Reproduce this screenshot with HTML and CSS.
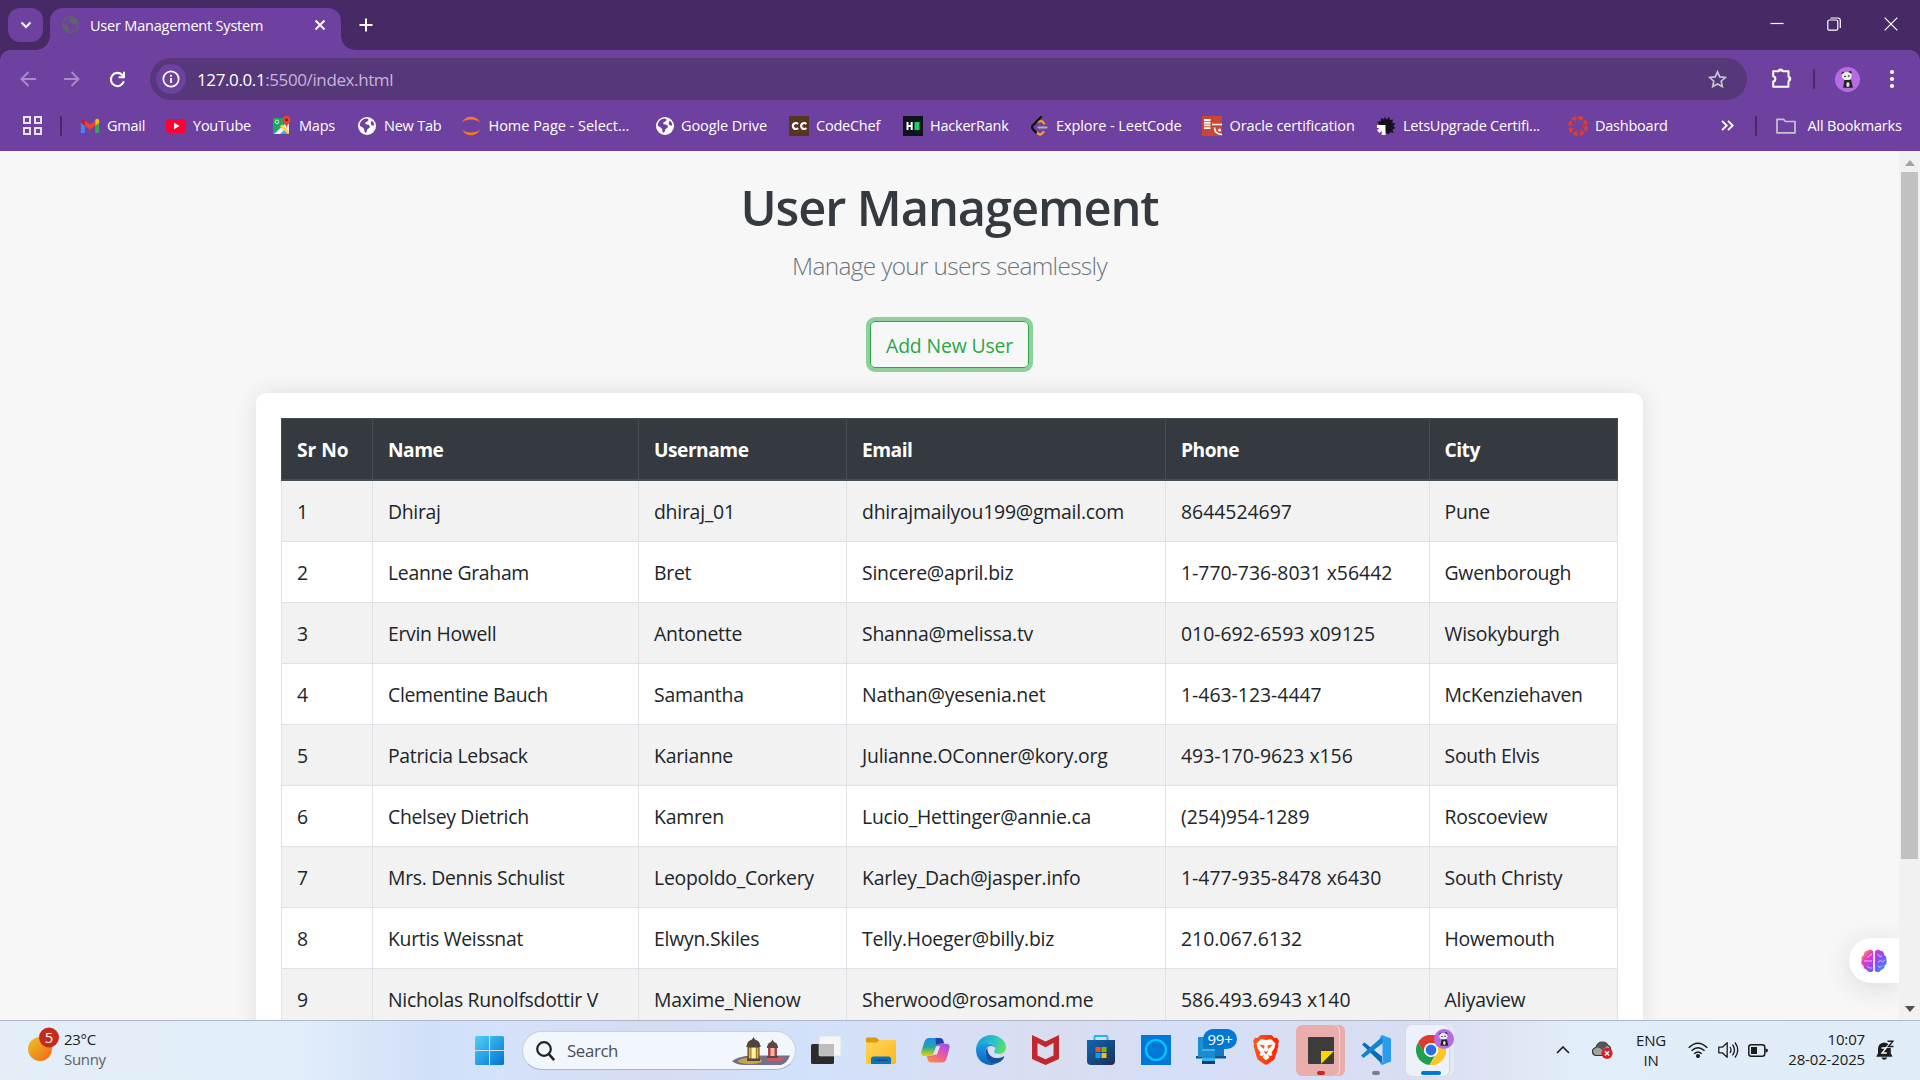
FILE: index.html
```html
<!DOCTYPE html>
<html lang="en">
<head>
<meta charset="utf-8">
<title>User Management System</title>
<link rel="stylesheet" href="styles.css">
</head>
<body>
<svg class="defs" width="0" height="0">
  <defs>
    <symbol id="globe" viewBox="0 0 20 20">
      <circle cx="10" cy="10" r="9" fill="currentColor"/>
      <path class="globe-land" d="M9.6 2.6c2 .2 2.500 1.400 1.300 2.500-1 .9-2.600.8-2.700 2.200 0 1.300 1.500 1.200 2.900 1.400 1.700.3 2.100 1.600 1.500 2.700-.7 1.100-2 .9-2.300 2.200-.3 1.500-.6 2.700-1.700 3.100-1.400-.3-1.200-2.300-1.500-3.500C6.700 11.500 4.200 10.800 2.700 9.500 2.900 5.800 6 2.700 9.600 2.600zM15 4.800c1.300 1.200 2.200 2.800 2.300 4.500-1.200.6-2.900.2-3.400-1-.4-1.300.1-2.600 1.100-3.500z"/>
    </symbol>
    <symbol id="globe-outline" viewBox="0 0 20 20">
      <circle cx="10" cy="10" r="8.200" fill="none" stroke="currentColor" stroke-width="1.600"/>
      <path fill="currentColor" d="M2 9c2.500 2 5 .8 5.300 2.800.2 1.400 1.600 1.500 1.500 3L8 18C4 17 1.500 13 2 9zM9 2c4-.5 7.500 2 8.500 6-1.300 2-3.300 2.500-4.500 1.500-1.500-1.200-4.500-.8-4.600-2.700C8.300 5 10.500 4.500 9 2z"/>
    </symbol>
    <symbol id="panda" viewBox="0 0 24 24">
      <circle cx="12" cy="12" r="12" fill="#b56ce2"/>
      <circle cx="7.800" cy="6" r="1.400" fill="#222"/><circle cx="14.500" cy="5.200" r="1.400" fill="#222"/>
      <ellipse cx="11.300" cy="8.700" rx="4.800" ry="4" fill="#eee"/>
      <ellipse cx="9.600" cy="9" rx="1" ry=".7" fill="#222"/><ellipse cx="13.200" cy="8.600" rx="1" ry=".7" fill="#222"/>
      <path d="M9 12.500h6.500l1.700 7.500H7.800z" fill="#222"/>
      <ellipse cx="12.400" cy="16.800" rx="1.600" ry="2.500" fill="#ddd"/>
    </symbol>
    <linearGradient id="gSun" x1="0" y1="0" x2="1" y2="1"><stop offset="0" stop-color="#edc52f"/><stop offset="1" stop-color="#f2640e"/></linearGradient>
    <linearGradient id="gWin" x1="0" y1="0" x2="1" y2="1"><stop offset="0" stop-color="#4fd0fb"/><stop offset="1" stop-color="#0272d1"/></linearGradient>
    <linearGradient id="gFold" x1="0" y1="0" x2="1" y2="1"><stop offset="0" stop-color="#ffd75e"/><stop offset="1" stop-color="#fbb81a"/></linearGradient>
    <linearGradient id="gCopA" x1="0" y1="0" x2="0" y2="1"><stop offset="0" stop-color="#1a8bee"/><stop offset=".5" stop-color="#27a4a4"/><stop offset=".78" stop-color="#8fc43b"/><stop offset="1" stop-color="#f5c518"/></linearGradient>
    <linearGradient id="gCopB" x1=".8" y1="0" x2=".2" y2="1"><stop offset="0" stop-color="#a04ff0"/><stop offset=".5" stop-color="#ea5a9c"/><stop offset="1" stop-color="#fb8a4a"/></linearGradient>
    <linearGradient id="gEdge" x1="0" y1=".3" x2="1" y2=".6"><stop offset="0" stop-color="#159fe0"/><stop offset=".6" stop-color="#2fc5c3"/><stop offset="1" stop-color="#62e15a"/></linearGradient>
    <linearGradient id="gEdgeB" x1="0" y1="0" x2="0" y2="1"><stop offset="0" stop-color="#1aa0e6"/><stop offset="1" stop-color="#0a63bd"/></linearGradient>
    <linearGradient id="gStore" x1="0" y1="0" x2="1" y2="1"><stop offset="0" stop-color="#0c67b8"/><stop offset="1" stop-color="#1f2f52"/></linearGradient>
    <linearGradient id="gBrain" gradientUnits="userSpaceOnUse" x1="2" y1="2" x2="25" y2="22"><stop offset="0" stop-color="#ff9d2e"/><stop offset=".25" stop-color="#ee35c4"/><stop offset=".55" stop-color="#8a4df5"/><stop offset="1" stop-color="#2496ff"/></linearGradient>
    <linearGradient id="gBrave" x1="0" y1="0" x2="1" y2="0"><stop offset="0" stop-color="#ff5a1f"/><stop offset="1" stop-color="#ff2000"/></linearGradient>
  </defs>
</svg>

<div class="screen">
  <header class="tabstrip">
    <div class="tab-search"><svg width="12" height="12" viewBox="0 0 12 12"><path d="M1.500 3.500 6 8l4.500-4.500" fill="none" stroke="#fff" stroke-width="2"/></svg></div>
    <div class="tab">
      <svg class="tab-icon" width="19" height="19"><use href="#globe-outline"/></svg>
      <span class="tab-title">User Management System</span>
      <svg width="12" height="12" viewBox="0 0 12 12"><path d="m1.500 1.500 9 9m0-9-9 9" stroke="#fff" stroke-width="1.800"/></svg>
    </div>
    <svg class="new-tab" width="14" height="14" viewBox="0 0 14 14"><path d="M7 .5v13M.5 7h13" stroke="#fff" stroke-width="2"/></svg>
    <div class="win-controls">
      <svg width="14" height="14" viewBox="0 0 14 14"><path d="M.5 6.500h13" stroke="#fff" stroke-width="1.200"/></svg>
      <svg width="14" height="14" viewBox="0 0 14 14" fill="none" stroke="#fff" stroke-width="1.200"><rect x=".8" y="3" width="10" height="10.200" rx="1.500"/><path d="M3.500 1h7.300q2.500 0 2.500 2.500v7.500"/></svg>
      <svg width="14" height="14" viewBox="0 0 14 14"><path d="m.7.7 12.600 12.600m0-12.600L.7 13.300" stroke="#fff" stroke-width="1.200"/></svg>
    </div>
  </header>

  <div class="chrome">
    <nav class="toolbar">
      <svg class="dim" width="16" height="16" viewBox="0 0 16 16"><path d="M16 8H2m6.500-7L1.500 8l7 7" fill="none" stroke="#a98bc9" stroke-width="1.900"/></svg>
      <svg class="dim" width="16" height="16" viewBox="0 0 16 16"><path d="M0 8h14M7.500 1l7 7-7 7" fill="none" stroke="#a98bc9" stroke-width="1.900"/></svg>
      <svg width="17" height="17" viewBox="0 0 17 17"><path d="M14.800 10.200A6.600 6.600 0 1 1 13.300 4L15 5.800" fill="none" stroke="#fff" stroke-width="2.100"/><path d="M16 .8v6.400H9.600V5.200H14V.8z" fill="#fff"/></svg>
      <div class="omnibox">
        <span class="site-info"><svg width="18" height="18" viewBox="0 0 18 18"><circle cx="9" cy="9" r="7.700" fill="none" stroke="#fff" stroke-width="1.700"/><path d="M9 8v5M9 4.800v1.900" stroke="#fff" stroke-width="1.800"/></svg></span>
        <span class="url">127.0.0.1<span>:5500/index.html</span></span>
        <svg class="star" width="19" height="19" viewBox="0 0 19 19"><path d="m9.500 1.900 2.300 5 5.400.6-4 3.700 1.100 5.400-4.800-2.700-4.800 2.700 1.100-5.400-4-3.700 5.400-.6z" fill="none" stroke="#c9c3cf" stroke-width="1.700"/></svg>
      </div>
      <svg class="ext" width="22" height="22" viewBox="0 0 22 22"><path d="M2.200 4.200H7.500a2.300 2.300 0 0 1 4.500 0h5.500v5.600a2.300 2.300 0 0 1 0 4.500v5.500H2.200v-5.200a2.700 2.700 0 0 0 0-5.300z" fill="none" stroke="#fff" stroke-width="2" stroke-linejoin="round"/><path d="M8.100 4.400a1.700 2.600 0 0 1 3.300 0zM17.400 10.400a2.600 1.700 0 0 1 0 3.300z" fill="#fff"/></svg>
      <i class="divider"></i>
      <svg class="avatar" width="25" height="25"><use href="#panda"/></svg>
      <svg width="6" height="20" viewBox="0 0 6 20" fill="#fff"><circle cx="3" cy="3" r="2.100"/><circle cx="3" cy="10" r="2.100"/><circle cx="3" cy="17" r="2.100"/></svg>
    </nav>

    <nav class="bookmarks">
      <svg class="apps" width="19" height="19" viewBox="0 0 19 19" fill="none" stroke="#e8e0f0" stroke-width="2"><path d="M1 1h6v6H1zM12 1h6v6h-6zM1 12h6v6H1zM12 12h6v6h-6z"/></svg>
      <i class="divider"></i>
      <a><svg viewBox="0 0 20 20"><path d="M.8 5v12h4V9.200z" fill="#4285f4"/><path d="M19.200 5v12h-4V9.200z" fill="#34a853"/><path d="M15.200 4.500v5.200l4-3V5c0-2-2.300-2.900-3.700-1.600z" fill="#fbbc04"/><path d="m4.800 9.700 5.200 4 5.200-4V4.500L10 8.400 4.800 4.500z" fill="#ea4335"/><path d="M.8 5v1.700l4 3V4.500l-.5-.9C2.900 2.600.8 3.300.8 5z" fill="#c5221f"/></svg>Gmail</a>
      <a><svg viewBox="0 0 20 20"><rect y="3" width="20" height="14" rx="3" fill="#ff0033"/><path d="m8 6.800 5.500 3.200L8 13.200z" fill="#fff"/></svg>YouTube</a>
      <a><svg viewBox="0 0 20 20"><path d="M1 2h16v16H1z" fill="#1fa463"/><path d="m1 18 8-7.500 8 7.500z" fill="#4aa0f5"/><path d="M2.500 18 17 4v5.500L8 18z" fill="#f4f4f4"/><path d="m10 11.500 7 6.500V8l-2-1z" fill="#f1f1f1"/><path d="m8 10.300 2-2L17 15.500V18h-1.500z" fill="#fdd22e"/><circle cx="5" cy="5.800" r="1.800" fill="none" stroke="#d8f0e2"/><path d="M14.500 0a4 4 0 0 1 4 4c0 3.500-4 4-4 8.500 0-4.500-4-5-4-8.500a4 4 0 0 1 4-4z" fill="#ea4335"/><circle cx="14.500" cy="4" r="1.400" fill="#7e1a14"/></svg>Maps</a>
      <a><svg class="white"><use href="#globe"/></svg>New Tab</a>
      <a class="wide"><svg viewBox="0 0 20 20" fill="#f37726"><path d="M1 6.500C3 2 7 .8 10 .8S17 2 19 6.500C16.500 4.300 13.500 3.500 10 3.500S3.500 4.300 1 6.500zM1 13.500C3 18 7 19.200 10 19.200s7-1.200 9-5.700c-2.500 2.200-5.500 3-9 3s-6.500-.8-9-3z"/></svg>Home Page - Select...</a>
      <a class="drive"><svg class="white"><use href="#globe"/></svg>Google Drive</a>
      <a><svg viewBox="0 0 20 20"><path d="M0 0h20v20H0z" fill="#56361e"/><path d="M9 7.900A3 3 0 1 0 9 12.100M17.300 7.900a3 3 0 1 0 0 4.200" fill="none" stroke="#fff" stroke-width="2.200"/></svg>CodeChef</a>
      <a><svg viewBox="0 0 20 20"><path d="M0 0h20v20H0z" fill="#0e141e"/><path d="M4.500 6v8M8.700 6v8M4.500 10h4.200" stroke="#fff" stroke-width="2"/><path d="M11.500 6h5v8h-5z" fill="#1ad660"/></svg>HackerRank</a>
      <a class="tight"><svg viewBox="0 0 20 20" fill="none" stroke-linecap="round"><path d="M7 5.800 10 5q1.500.3 3 2.300M6 16.500q2.500 3 4.500 1.500l2-2" stroke="#ffa116" stroke-width="2.200"/><path d="M10 1 1.800 9.500q-1.500 1.800 0 3.500L5 16.500" stroke="#090909" stroke-width="2.200"/><path d="M7.500 11.500h8" stroke="#b3b3b3" stroke-width="2.200"/></svg>Explore - LeetCode</a>
      <a class="oracle"><svg viewBox="0 0 20 20"><path d="M0 0h20v20H0z" fill="#c74634"/><path d="M2 4h6.500M2 6.700h6.500M2 9.400h6.500M2 12.100h6.500" stroke="#fff" stroke-width="1.900"/><path d="M10 8.500h10M12.500 11.500q0 6.500 7.500 7" stroke="#fff" stroke-width="1.600" fill="none"/><circle cx="17.500" cy="14" r="1.600" fill="#fff"/></svg>Oracle certification</a>
      <a><svg viewBox="0 0 20 20"><path d="m9 0 1 3.500L13.500 1l.5 3 3-.5-.8 3.200 3.300.8-2.200 2.500 2.200 2-3 1.500 1 3.500-3.500-.8-1.500 2.300-3-2.500L5 13 1 11l2.500-2.500L1 6l3.700-1L5 2l3 1.500z" fill="#15121c"/><path d="M1 9h8.500v10H5.700v-4.200L3.500 17 1 14.300l2.500-2.200H1z" fill="#fff"/></svg>LetsUpgrade Certifi...</a>
      <a><svg viewBox="0 0 20 20" fill="none"><circle cx="10" cy="10" r="8.300" stroke="#e23c2c" stroke-width="3.200" stroke-dasharray="4.700 1.820"/><circle cx="10" cy="10" r="5" stroke="#e23c2c" stroke-width="1.500" stroke-dasharray="1.500 2.430"/></svg>Dashboard</a>
      <svg class="more" width="13" height="11" viewBox="0 0 13 11"><path d="m1 .8 4.700 4.700L1 10.200M7 .8l4.700 4.700L7 10.200" fill="none" stroke="#fff" stroke-width="1.900"/></svg>
      <i class="divider"></i>
      <a class="all"><svg viewBox="0 0 20 20" fill="none" stroke="#c9c3cf" stroke-width="1.700" stroke-linejoin="round"><path d="M1 3.300h6.500l2 2.200H19v11.300H1z"/></svg>All Bookmarks</a>
    </nav>
  </div>

  <main class="viewport">
    <div class="page">
      <h1>User Management</h1>
      <p class="lead">Manage your users seamlessly</p>
      <button class="add">Add New User</button>
      <section class="card">
        <table>
          <colgroup><col class="c1"><col class="c2"><col class="c3"><col class="c4"><col class="c5"><col class="c6"></colgroup>
          <thead><tr><th>Sr No</th><th>Name</th><th>Username</th><th>Email</th><th>Phone</th><th>City</th></tr></thead>
          <tbody>
            <tr><td>1</td><td>Dhiraj</td><td>dhiraj_01</td><td>dhirajmailyou199@gmail.com</td><td>8644524697</td><td>Pune</td></tr>
            <tr><td>2</td><td>Leanne Graham</td><td>Bret</td><td>Sincere@april.biz</td><td>1-770-736-8031 x56442</td><td>Gwenborough</td></tr>
            <tr><td>3</td><td>Ervin Howell</td><td>Antonette</td><td>Shanna@melissa.tv</td><td>010-692-6593 x09125</td><td>Wisokyburgh</td></tr>
            <tr><td>4</td><td>Clementine Bauch</td><td>Samantha</td><td>Nathan@yesenia.net</td><td>1-463-123-4447</td><td>McKenziehaven</td></tr>
            <tr><td>5</td><td>Patricia Lebsack</td><td>Karianne</td><td>Julianne.OConner@kory.org</td><td>493-170-9623 x156</td><td>South Elvis</td></tr>
            <tr><td>6</td><td>Chelsey Dietrich</td><td>Kamren</td><td>Lucio_Hettinger@annie.ca</td><td>(254)954-1289</td><td>Roscoeview</td></tr>
            <tr><td>7</td><td>Mrs. Dennis Schulist</td><td>Leopoldo_Corkery</td><td>Karley_Dach@jasper.info</td><td>1-477-935-8478 x6430</td><td>South Christy</td></tr>
            <tr><td>8</td><td>Kurtis Weissnat</td><td>Elwyn.Skiles</td><td>Telly.Hoeger@billy.biz</td><td>210.067.6132</td><td>Howemouth</td></tr>
            <tr><td>9</td><td>Nicholas Runolfsdottir V</td><td>Maxime_Nienow</td><td>Sherwood@rosamond.me</td><td>586.493.6943 x140</td><td>Aliyaview</td></tr>
          </tbody>
        </table>
      </section>
      <div class="assistant">
        <svg width="26" height="24" viewBox="0 0 26 24"><path d="M12.200 2.500C11 .3 8 0 6.500 1.800 4 1.800 2.800 3.800 3 6 .8 7 .2 9 .8 11c-1.200 2.200-.3 4.700 1.700 5.500-.3 2.300 1.300 4 3.200 4.300 1.500 2.800 5 3.200 6.500 1z" fill="url(#gBrain)"/><path d="M13.800 2.500C15 .3 18 0 19.500 1.800c2.500 0 3.700 2 3.500 4.200 2.200 1 2.800 3 2.200 5 1.200 2.200.3 4.700-1.700 5.500.3 2.300-1.300 4-3.200 4.300-1.500 2.800-5 3.200-6.500 1z" fill="url(#gBrain)"/><path d="M3 12h8M6 8q2 .5 3-2l2-1M6 17q1 2.500 5 2M17 5l1.500 2.500L21 7M17 13l2.500-1.500 2 1.500 2-2M17 17l2 1.500 2-2" fill="none" stroke="#f4c8ff" stroke-width=".9"/></svg>
      </div>
    </div>
    <div class="scrollbar">
      <svg width="10" height="6" viewBox="0 0 10 6"><path d="M5 0l5 6H0z" fill="#a3a3a3"/></svg>
      <div class="thumb"></div>
      <svg width="10" height="6" viewBox="0 0 10 6"><path d="M0 0h10L5 6z" fill="#505050"/></svg>
    </div>
  </main>

  <footer class="taskbar">
    <div class="weather">
      <svg width="34" height="36" viewBox="0 0 34 36"><circle cx="12" cy="22" r="12" fill="url(#gSun)"/><circle cx="21" cy="10.500" r="10" fill="#c42b1c"/><text x="21" y="16" text-anchor="middle" class="badge-num">5</text></svg>
      <div class="weather-text"><span>23°C</span><span class="grey">Sunny</span></div>
    </div>
    <svg class="start" width="29" height="29" viewBox="0 0 29 29" fill="url(#gWin)"><path d="M1.500 0H14v14H0V1.500Q0 0 1.500 0zM15 0h12.500Q29 0 29 1.500V14H15zM0 15h14v14H1.500Q0 29 0 27.500zM15 15h14v12.500q0 1.500-1.500 1.500H15z"/></svg>
    <div class="search">
      <svg width="19" height="20" viewBox="0 0 19 20"><circle cx="8" cy="8" r="6.800" fill="none" stroke="#222" stroke-width="2.200"/><path d="m12.800 13 4.700 5.300" stroke="#222" stroke-width="2.600" stroke-linecap="round"/></svg>
      <span>Search</span>
      <svg class="lanterns" width="60" height="30" viewBox="0 0 60 30"><path d="M1 25Q8 20 20 19.500h39q-3 8-9 9.500H14Q5 29 1 25z" fill="#75708a"/><ellipse cx="19" cy="25" rx="12" ry="3" fill="#c6a840"/><ellipse cx="44" cy="23" rx="9" ry="2.300" fill="#ca5968"/><path d="M16 9q0-4 5-5.500L22.500 1 24 3.500Q29 5 29 9zM15.500 9h14v2h-14zM16 22.500h13V25H16z" fill="#51433e"/><path d="M16.500 11h12v12h-12z" fill="#4a3a28"/><path d="M17.700 11.500h2v11h-2zM25.500 11.500h2v11h-2z" fill="#e3b338"/><path d="M20.300 11.500h4.600v11h-4.600z" fill="#fff1a6"/><path d="M36.500 10q0-3 3.500-4l1.500-2.500L43 6q3.500 1 3.500 4zM36 10h11v2H36zM36 20h11v2H36z" fill="#5b4747"/><path d="M37 12h9v8h-9z" fill="#a24446"/><path d="M39.500 12h4v8h-4z" fill="#ffb2a0"/></svg>
    </div>
    <div class="tasks">
      <span><svg width="30" height="28" viewBox="0 0 30 28"><rect y="8" width="23" height="20" rx="1.500" fill="#2b2b2b"/><rect x="8" width="22" height="20" rx="1.200" fill="#f6f6f6"/><path d="M8 8h15v12H8z" fill="#bdbdbd"/><rect x="8" width="22" height="20" rx="1.200" fill="none" stroke="#d4d6dc" stroke-width=".6"/></svg></span>
      <span><svg width="30" height="27" viewBox="0 0 30 27"><path d="M0 2Q0 .5 1.500.5H10L13 3v5H0z" fill="#dc9b06"/><path d="M0 5.500h11L13.500 3H28.500Q30 3 30 4.500V25.500Q30 27 28.500 27H1.500Q0 27 0 25.500z" fill="url(#gFold)"/><path d="M5 27v-5q0-2.500 2.500-2.500h15Q25 19.500 25 22v5z" fill="#0c72bf"/><path d="M8.500 23.200h13" stroke="#07426f"/></svg></span>
      <span><svg width="29" height="26" viewBox="0 0 29 26"><path d="M8 1h11q2.500 0 3.200 2.500l.8 2.800-5 .7q-2.200 0-3 2.500L12.500 17Q11.700 19 9.500 19H4Q-.8 19 .5 14L3.500 4.500Q4.600 1 8 1z" fill="url(#gCopA)"/><path d="M14.500 1H19q2.500 0 3.200 2.500l.8 2.800-5 .7q-2 0-2.800 1.500z" fill="#1b45a8"/><path d="M21 25.500H10Q7.500 25.500 6.800 23L5.800 19H10q2.300 0 3-2.500L15.500 9q.7-2.200 3-2.200H25q4.700 0 3.300 5L25.500 22q-1.100 3.500-4.500 3.500z" fill="url(#gCopB)"/><path d="M15.500 9h3.600l-3.200 8.800H12z" fill="#dfe0f7"/></svg></span>
      <span><svg width="30" height="30" viewBox="0 0 30 30"><path d="M0 15C0 6.500 7 0 15 0s15 5.800 15 12c0 4.800-3.500 7-7 7-3.500 0-5-1.300-5-2.300 0-.8 1.200-1.300 1.200-3.500C19.200 10 15.500 8 11 8 5 8 .8 11.500 0 15z" fill="url(#gEdge)"/><path d="M0 15c.5-4 4.500-7 9.500-7 5.500 0 9.700 2.200 9.700 5-1-1.500-2.700-2-4.200-2-3.500 0-5.500 3-5.500 6.500 0 6 5 11 10 11.300C17.500 30 16 30 15 30 6.500 30 0 23.500 0 15z" fill="url(#gEdgeB)"/><path d="M11.500 13c-1.300 1.200-2 2.700-2 4.500C9.500 24 14 29 19.500 28.800c4-.8 7-3.300 8.700-6.500.3-.6-.2-1-.8-.7C19.500 25.500 11 21.500 11.500 13z" fill="#14539c"/></svg></span>
      <span><svg width="27" height="30" viewBox="0 0 27 30"><path d="M0 0 13.500 6.500 27 0v24l-13.500 6L0 24zM5.500 8v12.500l8 3.800 8-3.800V8l-8 4.200z" fill="#c1272d"/></svg></span>
      <span><svg width="28" height="30" viewBox="0 0 28 30"><path d="M7.500 7V2Q7.500 1 8.500 1h11q1 0 1 1v5" fill="none" stroke="#22b3f1" stroke-width="1.800"/><path d="M0 5h28v21q0 4-4 4H4q-4 0-4-4z" fill="url(#gStore)"/><path d="M8.500 12h5v5h-5z" fill="#f25022"/><path d="M14.500 12h5v5h-5z" fill="#7fba00"/><path d="M8.500 18h5v5h-5z" fill="#00a4ef"/><path d="M14.500 18h5v5h-5z" fill="#ffb900"/></svg></span>
      <span><svg width="30" height="30" viewBox="0 0 30 30"><path d="M0 0h30v30H0z" fill="#0078d7"/><circle cx="15" cy="15" r="10" fill="none" stroke="#00caff" stroke-width="2.200"/><path d="M8 21q4 3.500 5.500 5L17 25.200Q11 24.500 8 21z" fill="#00caff"/></svg></span>
      <span class="badged"><svg width="30" height="27" viewBox="0 0 30 27"><path d="M2 0h26v20H2z" fill="#1579bd"/><path d="M0 19h30v2.500H0z" fill="#0e5592"/><path d="M2 0h5v20H2z" fill="#1a8fd2"/><path d="M6 12h13v12H6z" fill="#35b7ec"/><path d="M6 14h13v7H6z" fill="#2089cf"/><path d="M6 24h13v3H6z" fill="#17406f"/></svg><b>99+</b></span>
      <span><svg width="26" height="30" viewBox="0 0 26 30"><path d="M7.500 0h11l3 3L24 2.700 26 6l-1 3 .5 2L22 23q-.5 1.500-2 2.500L14 29.500q-1 .7-2 0L6 25.500Q4.500 24.500 4 23L.5 11 1 9 0 6l2-3.300L4.500 3z" fill="url(#gBrave)"/><path d="m8 4 5 1 5-1 4.500 4.500-1 4.500-3 4.500 1 2.500-2 1-2.500-1 1.500 2.500-3.500 2.800-3.500-2.800L11 20l-2.500 1-2-1 1-2.500L4.500 13l-1-4.500z" fill="#fff"/><path d="m6 9.500 5.500 1-.5 3.500zM20 9.500l-5.500 1 .5 3.500zM10.500 15.500l2.500 1.300 2.500-1.300L13 19.500z" fill="#ff4a1a"/></svg></span>
      <span class="notes"><svg width="26" height="27" viewBox="0 0 26 27"><rect width="26" height="27" rx="1" fill="#3c3c3c"/><path d="M13 27V14h13z" fill="#ffd500"/></svg><u class="red"></u></span>
      <span><svg width="30" height="30" viewBox="0 0 30 30"><path d="M1 9.500 3.500 7.500 21 21.500V29z" fill="#0a6cb5"/><path d="M0 20.500 2.500 23 22 8V1z" fill="#1384ce"/><path d="M21 0 30 3.500v23L21 30l-2.500-2.200 3-1V3.500l-3-1z" fill="#2a9df0"/></svg><u></u></span>
      <span class="active"><svg width="30" height="30" viewBox="0 0 30 30"><circle cx="15" cy="15" r="15" fill="#fff"/><path d="M15 8.200h13.500A15 15 0 0 0 2 7.500l6.800 11a7 7 0 0 1 6.200-10.300z" fill="#df3a2e"/><path d="M9.100 18.500 2 7.500A15 15 0 0 0 13.500 30l6.600-11.200a6.900 6.900 0 0 1-11-.3z" fill="#1ea04c"/><path d="M20.700 18.800 13.500 30A15 15 0 0 0 28.600 8.200H15a6.900 6.900 0 0 1 5.700 10.600z" fill="#fcc624"/><circle cx="15" cy="15" r="6.900" fill="#fff"/><circle cx="15" cy="15" r="5.400" fill="#2a6fe8"/></svg><svg class="profile" width="20" height="20"><use href="#panda"/></svg><u class="blue"></u></span>
    </div>
    <div class="tray">
      <svg class="up" width="14" height="8" viewBox="0 0 14 8"><path d="m1 7 6-6 6 6" fill="none" stroke="#1c1c1c" stroke-width="1.600"/></svg>
      <svg class="cloud" width="21" height="18" viewBox="0 0 21 18"><path d="M4 14.500q-3.500-.5-3.500-4Q.7 7 4 6.500 5.500 1 10.500 1q4 0 5.500 3.500 3 1 2.500 5l-5 5z" fill="#a2a2a2" stroke="#333" stroke-width="1.200"/><path d="M4 6.700Q8 5.500 10 9l6-4.500Q14.500 1 10.500 1 5.500 1 4 6.700z" fill="#555"/><circle cx="15" cy="12.300" r="5.600" fill="#d81f2a"/><path d="m12.900 10.200 4.200 4.200m0-4.200-4.200 4.200" stroke="#fff" stroke-width="1.400"/></svg>
      <div class="lang"><span>ENG</span><span>IN</span></div>
      <svg class="wifi" width="20" height="16" viewBox="0 0 20 16" fill="none" stroke="#1c1c1c" stroke-width="1.500"><path d="M.7 5.800q9.300-9 18.600 0M3.500 8.800q6.500-6.200 13 0M6.300 11.700q3.700-3.500 7.400 0"/><circle cx="10" cy="14" r="1.300" fill="#1c1c1c"/></svg>
      <svg class="volume" width="21" height="18" viewBox="0 0 21 18" fill="none" stroke="#1c1c1c" stroke-width="1.300"><path d="M.8 6.200h3.500L9.200 1.700v14.600l-4.900-4.500H.8zM12 6q2 3 0 6M14.500 3.700q4 5.300 0 10.600M17 1.500q5.500 7.500 0 15" stroke-linejoin="round"/></svg>
      <svg class="battery" width="20" height="13" viewBox="0 0 20 13"><rect x=".8" y=".8" width="16" height="11.400" rx="2.500" fill="none" stroke="#1c1c1c" stroke-width="1.500"/><rect x="3" y="3" width="6" height="7" fill="#1c1c1c"/><path d="M17.500 4.500Q20 4.500 20 6.500t-2.500 2z" fill="#1c1c1c"/></svg>
      <div class="clock"><span>10:07</span><span>28-02-2025</span></div>
      <svg class="bell" width="18" height="20" viewBox="0 0 18 20"><path d="M8 2.500q-6 .7-6 6.500v4.500L.5 16v.8h15.800V16l-1.500-2.500V9q0-5.700-6.800-6.500z" fill="#1c1c1c"/><path d="M5.300 17.500h6q-1 2.300-3 2.300t-3-2.300z" fill="#1c1c1c"/><path d="M11.500 1.200H17L12.500 6.500h5" fill="none" stroke="#e0ecf8" stroke-width="3.200"/><path d="M11.500 1.200H17L12.500 6.500h5" fill="none" stroke="#1c1c1c" stroke-width="1.400"/><path d="M5.500 8h4.700L6 13h4.800" fill="none" stroke="#fff" stroke-width="1.300"/></svg>
    </div>
  </footer>
</div>
</body>
</html>
```
FILE: styles.css
```css
* { box-sizing: border-box; }
body { margin: 0; background: #f7f7f7; font-family: "Open Sans", "Noto Sans", sans-serif; overflow: hidden; }
svg { display: block; flex: none; }
.defs { position: absolute; }
.globe-land { fill: #6e41a0; }
.screen { width: 1920px; height: 1080px; display: flex; flex-direction: column; overflow: hidden; }

/* Tab strip */
.tabstrip { height: 50px; background: #472a65; display: flex; align-items: flex-start; padding-left: 8px; }
.tab-search { width: 35px; height: 34px; margin-top: 8px; border-radius: 12px; background: #6e41a0; display: flex; align-items: center; justify-content: center; }
.tab { position: relative; width: 291px; height: 42px; margin: 8px 0 0 7px; padding: 0 15px 9px 11px; border-radius: 13px 13px 0 0; background: #6e41a0; display: flex; align-items: center; }
.tab::before, .tab::after { content: ""; position: absolute; bottom: 0; width: 14px; height: 14px; }
.tab::before { left: -14px; background: radial-gradient(circle at 0 0, transparent 13.500px, #6e41a0 14px); }
.tab::after { right: -14px; background: radial-gradient(circle at 100% 0, transparent 13.500px, #6e41a0 14px); }
.tab-icon { color: #5f6368; }
.tab-title { flex: 1; margin-left: 10px; padding-top: 2px; color: #fff; font-size: 14.500px; letter-spacing: -.2px; white-space: nowrap; }
.new-tab { margin: 18px 0 0 18px; }
.win-controls { margin-left: auto; padding: 17px 22px 0 0; display: flex; gap: 43px; }

/* Toolbar and bookmarks */
.chrome { height: 101px; background: radial-gradient(circle at 10px 10px, #6e41a0 9.500px, #472a65 10px) 0 0 / 10px 10px no-repeat, radial-gradient(circle at 0 10px, #6e41a0 9.500px, #472a65 10px) 100% 0 / 10px 10px no-repeat, #6e41a0; }
.toolbar { height: 50px; padding: 8px 25px 0 20px; display: flex; align-items: center; }
.toolbar .dim { margin-right: 28px; }
.toolbar .dim + .dim { margin-right: 29px; }
.omnibox { flex: 1; height: 42px; margin-left: 24px; padding: 0 20px 0 6px; border-radius: 21px; background: #56377a; display: flex; align-items: center; }
.site-info { width: 30px; height: 30px; border-radius: 50%; background: #6e41a0; display: flex; align-items: center; justify-content: center; }
.url { flex: 1; margin-left: 11px; color: #fff; font-size: 17px; letter-spacing: -.39px; }
.url span { color: #c5b5d6; }
.ext { margin: 0 20px 3px 24px; }
.divider { width: 2px; height: 20px; border-radius: 1px; background: #472a65; }
.avatar { margin: 0 29px 0 20px; }
.bookmarks { height: 51px; padding-left: 23px; display: grid; align-items: center; grid-template-columns: 37px 20px 86px 106px 85px 104px 194px 134px 114px 128px 171px 174px 192px 153px 34px 21px 130px; color: #fff; font-size: 14.500px; letter-spacing: -.23px; }
.bookmarks a { display: flex; align-items: center; gap: 7px; white-space: nowrap; }
.bookmarks a.wide { gap: 7.500px; letter-spacing: -.02px; }
.bookmarks a.drive { gap: 6px; letter-spacing: -.08px; }
.bookmarks a.oracle { gap: 7.500px; letter-spacing: -.12px; }
.bookmarks a.tight { gap: 5px; letter-spacing: -.08px; }
.bookmarks a.all { gap: 11.500px; letter-spacing: -.18px; }
.bookmarks a svg { width: 20px; height: 20px; }
.bookmarks .white { color: #fff; }

/* Web page */
.viewport { height: 869px; display: flex; background: #f7f7f7; overflow: hidden; }
.page { position: relative; width: 1899px; padding-top: 26px; display: flex; flex-direction: column; align-items: center; color: #212529; overflow: hidden; }
h1 { margin: 0; color: #343a40; font-size: 48.800px; line-height: 60px; font-weight: 600; letter-spacing: -1.100px; }
.lead { margin: 10px 0 0; color: #6c757d; font-size: 24.400px; line-height: 37.500px; font-weight: 300; letter-spacing: -.66px; }
.add { flex: none; width: 159px; height: 47px; margin: 36px 0 25px; padding: 9px 0 6px; border: 1.250px solid #28a745; border-radius: 5px; background: transparent; box-shadow: 0 0 0 4px rgba(40, 167, 69, .5); color: #28a745; font: 19.400px/30px "Open Sans", sans-serif; letter-spacing: -.15px; }
.card { flex: none; width: 1387px; height: 760px; padding: 25px; border-radius: 10px; background: #fff; box-shadow: 0 0 25px rgba(0, 0, 0, .1); }
table { width: 1337px; table-layout: fixed; border-collapse: collapse; font-size: 19.400px; line-height: 30px; letter-spacing: -.24px; }
.c1 { width: 91px; } .c2 { width: 266px; } .c3 { width: 208px; } .c4 { width: 319px; } .c5 { width: 264px; } .c6 { width: 188px; }
th, td { height: 61px; padding: 16px 0 14px 15px; border: 1px solid #dee2e6; text-align: left; white-space: nowrap; }
th { height: 62px; padding: 16px 0 14px 15px; background: #343a40; border-color: #454d55; border-bottom-width: 2px; color: #fff; font-size: 19.200px; font-weight: 700; letter-spacing: -.5px; }
th:first-child { letter-spacing: 0; }
td:nth-child(2) { letter-spacing: -.3px; }
td:nth-child(4) { letter-spacing: -.22px; }
td:nth-child(5) { letter-spacing: 0; }
th:last-child, td:last-child { padding-left: 14.500px; }
tbody tr:nth-child(odd) { background: #f2f2f2; }
.assistant { position: absolute; right: 0; top: 787px; width: 50px; height: 45px; padding: 11px 0 0 12px; border-radius: 23px 0 0 23px; background: #fff; box-shadow: 0 5px 30px rgba(0, 0, 0, .12); }
.scrollbar { width: 21px; background: #f1f1f1; display: flex; flex-direction: column; align-items: center; padding: 9px 0 8px; }
.thumb { width: 17px; height: 687px; margin: 6px 0 auto; background: #c1c1c1; }

/* Taskbar */
.taskbar { height: 60px; border-top: 1px solid #adb9cb; background: linear-gradient(90deg, #e3eef7 0, #e1edf9 300px, #d1dff9 430px, #d4e2fa 500px, #d6dcf2 660px, #d2e1fb 790px, #d7dff5 960px, #d9ddf0 1060px, #d5dff8 1160px, #d8def2 1400px, #dfe3f3 1490px, #e1edf9 1570px, #e0ecf8 1920px); display: flex; color: #1c1c1c; font-size: 15px; letter-spacing: -.15px; }
.weather { width: 447px; padding: 6px 0 0 28px; display: flex; gap: 2px; }
.badge-num { font: 15px "Open Sans", sans-serif; fill: #fff; }
.weather-text span { display: block; line-height: 20px; white-space: nowrap; }
.weather-text { padding-top: 2px; letter-spacing: -.3px; }
.grey { color: #5c6269; }
.start { margin: 15px 18px 0 28px; }
.search { width: 274px; height: 39px; margin-top: 10px; padding-left: 13px; border: 1px solid #c5d0e4; border-bottom-color: #a7b3c9; border-radius: 20px; background: #f2f6fd; display: flex; align-items: center; font-size: 16.800px; letter-spacing: -.35px; color: #4a4d52; }
.search span { margin-left: 12px; }
.lanterns { margin: 0 4px 0 auto; }
.tasks { display: grid; grid-template-columns: repeat(12, 55px); margin-left: 2px; }
.tasks span { position: relative; display: flex; align-items: center; justify-content: center; height: 58px; }
.tasks b { position: absolute; left: 20px; top: 8px; width: 34px; height: 20px; border-radius: 10px; background: #0078d4; color: #fff; font: 15px/20px "Open Sans", sans-serif; text-align: center; letter-spacing: -.3px; }
.tasks u { position: absolute; bottom: 4px; left: 24px; width: 8px; height: 4px; border-radius: 2px; background: #7a7f8a; }
.tasks .red { background: #c42b1c; }
.tasks .blue { left: 18px; width: 20px; background: #0078d4; }
.tasks .notes::before, .tasks .active::before { content: ""; position: absolute; left: 3px; top: 4px; width: 43px; height: 51px; border-radius: 6px; background: #e9aeab; box-shadow: 1px 0 0 #f1dfe4, 6px 0 0 #e9aeab; }
.tasks .active::before { background: #edf1fa; box-shadow: 1px 0 0 #cfd6e6, 5px 0 0 #e3e9f6, 0 0 0 1px #d6dbea; }
.notes svg, .active svg { position: relative; }
.tasks .active .profile { position: absolute; left: 31px; top: 8px; }
.tray { flex: 1; display: flex; align-items: center; height: 58px; }
.tray span { display: block; line-height: 20px; height: 20px; }
.up { margin-left: 98px; }
.cloud { margin-left: 22px; }
.lang { width: 40px; margin-left: 18px; text-align: center; }
.wifi { margin-left: 17px; }
.volume { margin-left: 10px; }
.battery { margin-left: 9px; }
.clock { width: 88px; margin: -2px 0 0 9px; text-align: right; }
.bell { margin-left: 11px; }
```
